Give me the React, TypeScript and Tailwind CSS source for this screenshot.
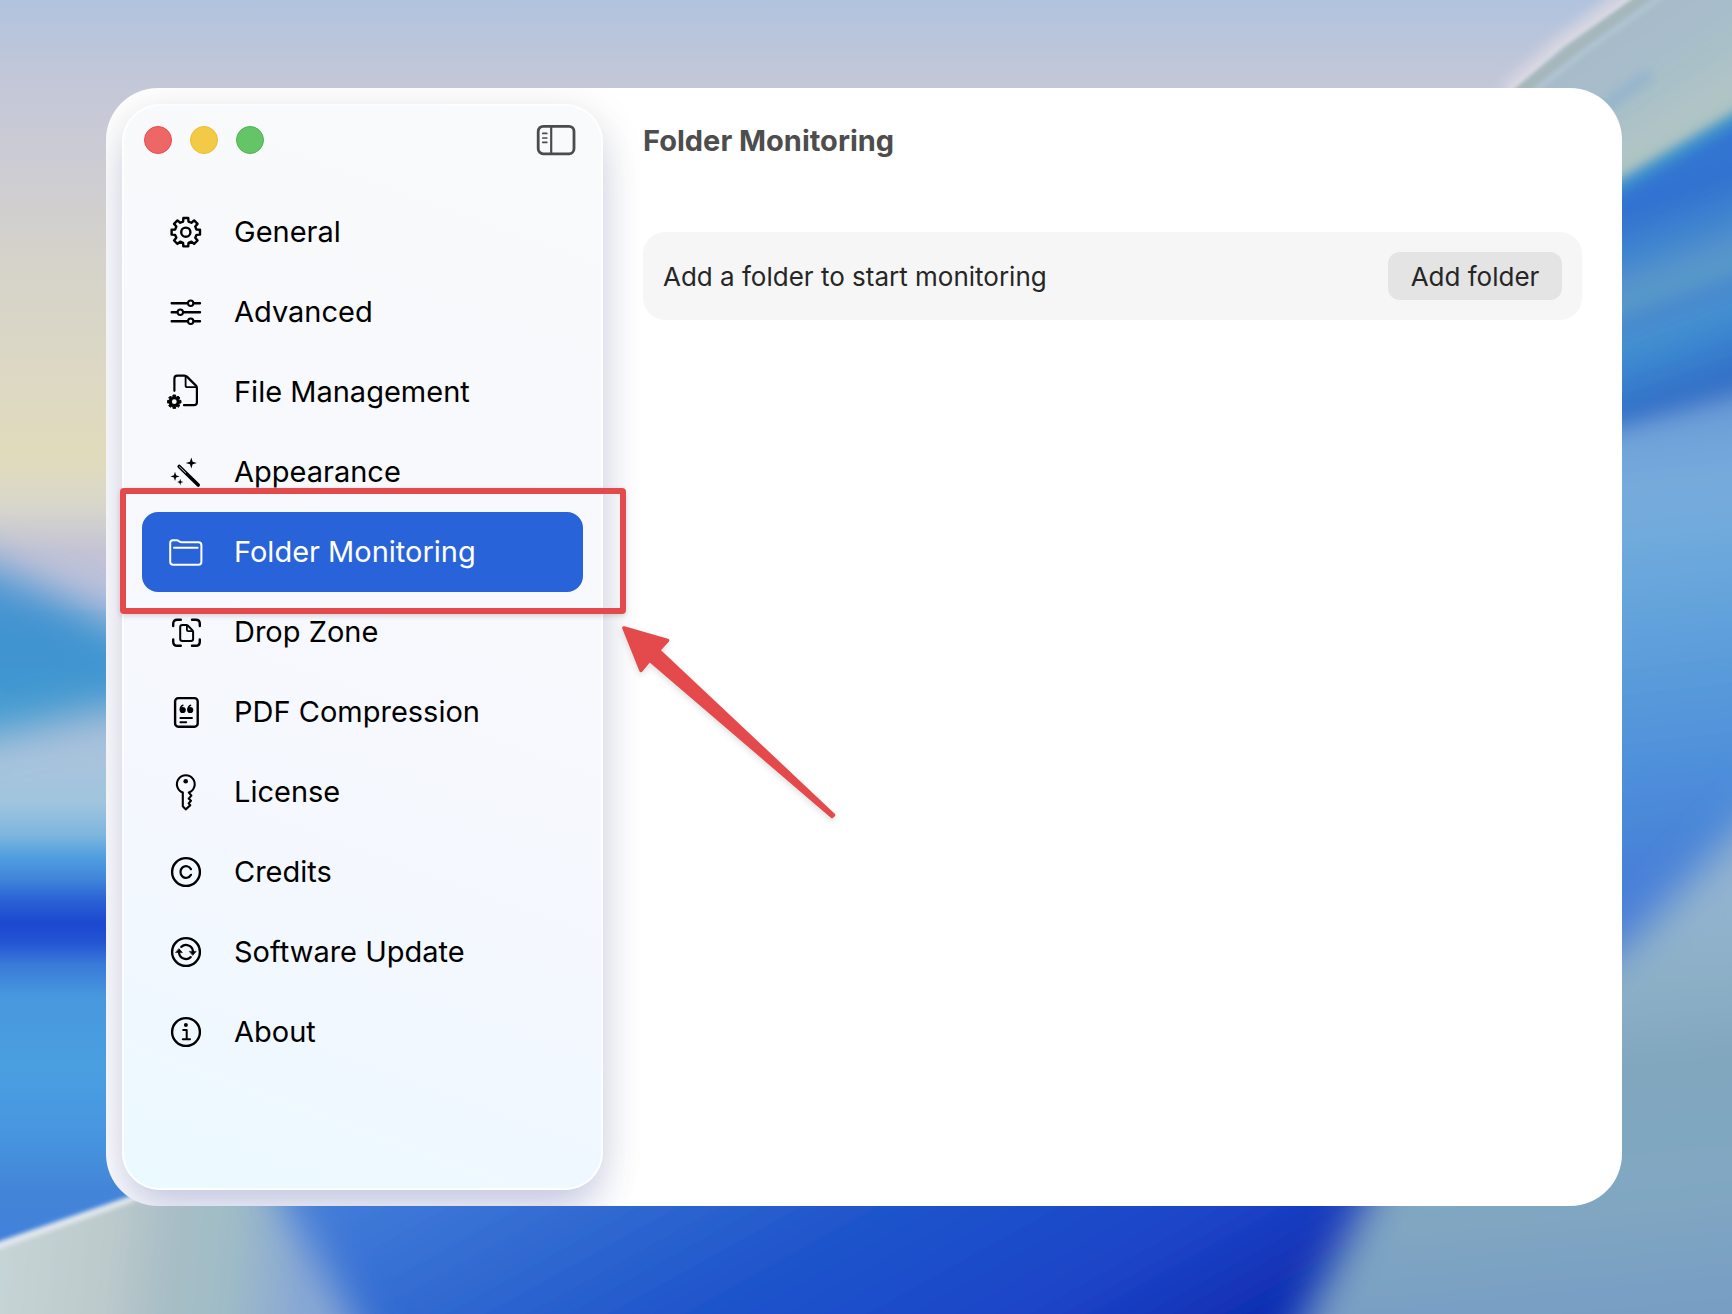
import type { ReactNode } from "react";

function gearPath(cx: number, cy: number, outer: number, inner: number, tipHalf: number, rootHalf: number) {
  const points: string[] = [];
  for (let i = 0; i < 8; i++) {
    const a = (i * Math.PI) / 4 - Math.PI / 2;
    const at = (r: number, t: number) => `${(cx + r * Math.cos(a + t)).toFixed(2)} ${(cy + r * Math.sin(a + t)).toFixed(2)}`;
    points.push(at(inner, -rootHalf), at(outer, -tipHalf), at(outer, tipHalf), at(inner, rootHalf));
  }
  return `M${points.join("L")}Z`;
}

function sparkPath(x: number, y: number, r: number) {
  const k = r * 0.24;
  return `M${x} ${y - r}L${x + k} ${y - k}L${x + r} ${y}L${x + k} ${y + k}L${x} ${y + r}L${x - k} ${y + k}L${x - r} ${y}L${x - k} ${y - k}Z`;
}

function Icon({ children }: { children: ReactNode }) {
  return (
    <svg
      viewBox="0 0 40 40"
      className="size-10 shrink-0 overflow-visible"
      fill="none"
      stroke="currentColor"
      strokeWidth="2.4"
      strokeLinecap="round"
      strokeLinejoin="round"
      aria-hidden="true"
    >
      {children}
    </svg>
  );
}

const icons = {
  general: (
    <Icon>
      <path d={gearPath(19.8, 20.2, 14.4, 11, 0.17, 0.25)} />
      <circle cx="19.8" cy="20.2" r="4.6" />
    </Icon>
  ),
  advanced: (
    <Icon>
      <path d="M5.7 11.3H21.7M27.7 11.3H34M5.7 20.3H11.3M17.3 20.3H34M5.7 29.3H21.7M27.7 29.3H34" />
      <circle cx="24.7" cy="11.3" r="2.7" strokeWidth="2" />
      <circle cx="14.3" cy="20.3" r="2.7" strokeWidth="2" />
      <circle cx="24.7" cy="29.3" r="2.7" strokeWidth="2" />
    </Icon>
  ),
  file: (
    <Icon>
      <path d="M8.4 18.8V6.6Q8.4 3.7 11.3 3.7H18.5Q20 3.7 21.2 4.9L29.7 13.4Q30.9 14.6 30.9 16V30.2Q30.9 33.2 27.9 33.2H18" strokeWidth="2.2" />
      <path d="M19.6 4.2V13.4Q19.6 15.2 21.4 15.2H30.2" strokeWidth="1.8" />
      <path d={gearPath(8.3, 29.7, 6.8, 5.2, 0.2, 0.26)} fill="currentColor" strokeWidth="1" />
      <circle cx="8.3" cy="29.7" r="2.4" className="fill-[#f8fafc]" stroke="none" />
    </Icon>
  ),
  appearance: (
    <Icon>
      <path d="M13.2 14.5L32.2 33" strokeWidth="3.6" />
      <path d="M13.4 14.7L19.6 20.8" className="stroke-[#d8dadc]" strokeWidth="1" />
      <path d={sparkPath(25.3, 11, 5.6)} fill="currentColor" stroke="none" />
      <path d={sparkPath(9, 24.4, 4.6)} fill="currentColor" stroke="none" />
      <path d={sparkPath(14.2, 30, 3.2)} fill="currentColor" stroke="none" />
    </Icon>
  ),
  folder: (
    <Icon>
      <path
        d="M4.2 12V11Q4.2 8.2 7 8.2H10.6Q11.8 8.2 12.8 9L13.6 9.6Q14.4 10.2 15.6 10.2H32.4Q35.4 10.2 35.4 13.2V29.8Q35.4 32.8 32.4 32.8H7.2Q4.2 32.8 4.2 29.8Z"
        strokeWidth="2"
      />
      <path d="M8 15.7H31.6" strokeWidth="2" />
    </Icon>
  ),
  drop: (
    <Icon>
      <path d="M7.2 14V11.8Q7.2 7.8 11.2 7.8H14.8M26 7.8H29.8Q33.8 7.8 33.8 11.8V14M33.8 27.4V29.8Q33.8 33.8 29.8 33.8H26M14.8 33.8H11.2Q7.2 33.8 7.2 29.8V27.4" />
      <path
        d="M14.2 15.2Q14.2 13 16.4 13H20Q21.2 13 22 13.8L26.3 18.1Q27.1 18.9 27.1 20.1V26.8Q27.1 29 24.9 29H16.4Q14.2 29 14.2 26.8Z"
        strokeWidth="2"
      />
      <path d="M20.9 13.6V17.6Q20.9 19.2 22.5 19.2H26.6" strokeWidth="1.8" />
    </Icon>
  ),
  pdf: (
    <Icon>
      <rect x="9.1" y="6.1" width="22.6" height="28.6" rx="3.2" />
      <circle cx="16.7" cy="18" r="3.1" fill="currentColor" stroke="none" />
      <circle cx="24.2" cy="18" r="3.1" fill="currentColor" stroke="none" />
      <path d="M14.3 17.4Q14.2 14.4 17 13.2M22 17.4Q21.9 14.4 24.7 13.2" strokeWidth="1.3" />
      <path d="M14.4 26H26M14.4 30.3H20.2" strokeWidth="1.9" />
    </Icon>
  ),
  key: (
    <Icon>
      <path
        d="M16.8 20.6V34.2L19.7 37.4L24.3 33.2L22.6 31.4L25 28.8L22.6 26.6L25.4 23.6L22.8 20.6A8.9 8.9 0 1 0 16.8 20.6Z"
        strokeWidth="2.1"
      />
      <circle cx="19.7" cy="9.3" r="2.3" fill="currentColor" stroke="none" />
    </Icon>
  ),
  credits: (
    <Icon>
      <circle cx="20" cy="20" r="13.9" />
      <path d="M25 17.2A5.6 5.9 0 1 0 25 22.8" strokeWidth="2.2" />
    </Icon>
  ),
  update: (
    <Icon>
      <circle cx="20" cy="20" r="13.9" />
      <path d="M15.3 14.9A7 7 0 0 1 27 19.4M24.7 25.1A7 7 0 0 1 13 20.6" strokeWidth="2.2" />
      <path d="M23.6 19.4H30.2L26.9 23.2ZM9.8 20.6H16.4L13.1 16.8Z" fill="currentColor" strokeWidth="0.6" />
    </Icon>
  ),
  about: (
    <Icon>
      <circle cx="20" cy="20" r="13.9" />
      <circle cx="19.9" cy="13" r="2" fill="currentColor" stroke="none" />
      <path d="M17.2 17.9H20.7V27.2M16.8 27.3H24" strokeWidth="2" />
    </Icon>
  ),
};

const items: { label: string; icon: ReactNode; active?: boolean }[] = [
  { label: "General", icon: icons.general },
  { label: "Advanced", icon: icons.advanced },
  { label: "File Management", icon: icons.file },
  { label: "Appearance", icon: icons.appearance },
  { label: "Folder Monitoring", icon: icons.folder, active: true },
  { label: "Drop Zone", icon: icons.drop },
  { label: "PDF Compression", icon: icons.pdf },
  { label: "License", icon: icons.key },
  { label: "Credits", icon: icons.credits },
  { label: "Software Update", icon: icons.update },
  { label: "About", icon: icons.about },
];

function Stops({ list }: { list: [number, string][] }) {
  return (
    <>
      {list.map(([offset, color]) => (
        <stop key={offset} offset={offset} stopColor={color} />
      ))}
    </>
  );
}

function Blur({ id, amount }: { id: string; amount: number }) {
  return (
    <filter id={id} x="-40%" y="-40%" width="180%" height="180%">
      <feGaussianBlur stdDeviation={amount} />
    </filter>
  );
}

function Wallpaper() {
  return (
    <svg
      className="absolute inset-0 h-full w-full"
      viewBox="0 0 1732 1314"
      preserveAspectRatio="none"
      aria-hidden="true"
    >
      <defs>
        <Blur id="blurThin" amount={2} />
        <Blur id="blurSoft" amount={6} />
        <Blur id="blurMid" amount={11} />
        <Blur id="blurWide" amount={20} />
        <linearGradient id="sky" gradientUnits="userSpaceOnUse" x1="0" y1="0" x2="0" y2="600">
          <Stops list={[[0, "#b1c3de"], [0.13, "#c2c7d8"], [0.25, "#cbcbd4"], [0.42, "#d5d2cb"], [0.62, "#dcd8c4"], [0.76, "#e1dbbc"], [0.84, "#d9d7cb"], [0.92, "#c3c3d5"], [1, "#b9c0dc"]]} />
        </linearGradient>
        <linearGradient id="teal" gradientUnits="userSpaceOnUse" x1="0" y1="560" x2="0" y2="750">
          <Stops list={[[0, "#5f9cd4"], [0.35, "#3e92d0"], [0.75, "#4299d0"], [1, "#4fa9d4"]]} />
        </linearGradient>
        <linearGradient id="waves" gradientUnits="userSpaceOnUse" x1="0" y1="716" x2="0" y2="1256">
          <Stops list={[[0, "#aabfda"], [0.08, "#a9c3dc"], [0.16, "#a0c5de"], [0.22, "#7eb6de"], [0.26, "#519fdf"], [0.3, "#4187da"], [0.34, "#2b62d5"], [0.385, "#1c47d0"], [0.42, "#2455d3"], [0.46, "#3a7ad9"], [0.52, "#4898de"], [0.65, "#499fe0"], [0.76, "#4897e0"], [0.88, "#4385d8"], [1, "#4180dc"]]} />
        </linearGradient>
        <linearGradient id="leaf" gradientUnits="userSpaceOnUse" x1="0" y1="1260" x2="300" y2="1290">
          <Stops list={[[0, "#c6d4d6"], [0.35, "#bccacc"], [0.55, "#a9bec6"], [0.75, "#9fbcc6"], [1, "#8aa9d4"]]} />
        </linearGradient>
        <linearGradient id="deep" gradientUnits="userSpaceOnUse" x1="330" y1="1206" x2="593" y2="1679">
          <Stops list={[[0, "#427cd8"], [0.33, "#2b63cf"], [0.5, "#1f54cb"], [0.65, "#1d4dca"], [0.83, "#1b42c6"], [1, "#102eb2"]]} />
        </linearGradient>
        <linearGradient id="glass" gradientUnits="userSpaceOnUse" x1="1580" y1="20" x2="1670" y2="160">
          <Stops list={[[0, "#a6bbc6"], [0.35, "#a8bccb"], [0.6, "#a9c0c8"], [0.8, "#b0c4c7"], [1, "#adc3be"]]} />
        </linearGradient>
        <linearGradient id="ribbon" gradientUnits="userSpaceOnUse" x1="1622" y1="180" x2="1702" y2="400">
          <Stops list={[[0, "#3374d2"], [0.15, "#3373d0"], [0.3, "#3f84cf"], [0.42, "#5492cc"], [0.5, "#5899c8"], [0.58, "#4a8ace"], [0.68, "#438fd0"], [0.78, "#3a84d0"], [0.92, "#3473c8"], [1, "#3770c6"]]} />
        </linearGradient>
        <linearGradient id="right" gradientUnits="userSpaceOnUse" x1="1622" y1="400" x2="1682" y2="920">
          <Stops list={[[0, "#6294d2"], [0.1, "#72a5da"], [0.2, "#76acdc"], [0.35, "#69a6dc"], [0.52, "#5a9cda"], [0.7, "#4f90da"], [0.85, "#4984d8"], [1, "#497dd8"]]} />
        </linearGradient>
        <linearGradient id="mist" gradientUnits="userSpaceOnUse" x1="1660" y1="900" x2="1700" y2="1314">
          <Stops list={[[0, "#93b4d0"], [0.2, "#8cb0c6"], [0.4, "#80a6be"], [0.7, "#81a7c2"], [1, "#779dc4"]]} />
        </linearGradient>
      </defs>
      <rect width="1732" height="620" fill="url(#sky)" />
      <rect y="610" width="866" height="704" fill="url(#waves)" />
      <path d="M-80 535L0 568L106 622L220 670V705L106 708L0 734L-80 748Z" fill="url(#teal)" filter="url(#blurWide)" />
      <path d="M-60 1270L0 1241L130 1196L300 1110H700V1500H-60Z" fill="#e1e7ec" filter="url(#blurThin)" />
      <path d="M-60 1278L0 1249L130 1203L300 1120H700V1500H-60Z" fill="url(#leaf)" filter="url(#blurThin)" />
      <path d="M230 1060L288 1206L350 1314L420 1460H1560V1060Z" fill="url(#deep)" filter="url(#blurWide)" />
      <path d="M1640 -16L1556 46L1506 90" stroke="#d6d5e2" strokeWidth="14" fill="none" filter="url(#blurSoft)" />
      <path d="M1644 -16L1622 0L1556 47L1506 90L1440 150H1800V-40Z" fill="#dcdae2" filter="url(#blurThin)" />
      <path d="M1654 -16L1632 0L1564 47L1514 90L1440 160V300H1800V-40Z" fill="url(#glass)" filter="url(#blurThin)" />
      <path d="M1662 -16L1570 52L1510 100" stroke="#a6b7ba" strokeWidth="9" fill="none" filter="url(#blurThin)" />
      <path d="M1680 -16L1584 52L1524 100" stroke="#b0c5d2" strokeWidth="5" fill="none" filter="url(#blurThin)" />
      <path d="M1590 118L1650 74" stroke="#93b3cc" strokeWidth="12" fill="none" filter="url(#blurSoft)" />
      <path d="M1500 250L1622 178L1732 114L1800 76V520H1500Z" fill="#3f93cc" filter="url(#blurSoft)" />
      <path d="M1500 262L1622 192L1732 128L1800 90V520H1500Z" fill="url(#ribbon)" filter="url(#blurSoft)" />
      <path d="M1500 452L1622 426L1732 396L1800 380V1100H1500Z" fill="url(#right)" filter="url(#blurMid)" />
      <path d="M1420 1080L1622 950L1732 835L1800 770V1500H1240L1306 1314L1362 1206Z" fill="url(#mist)" filter="url(#blurWide)" />
    </svg>
  );
}

function Callout() {
  return (
    <div className="pointer-events-none absolute -top-6 right-[-43px] bottom-[-22px] left-[-22px] z-10 rounded-sm border-6 border-[#e4494b] shadow-[0_2px_5px_rgba(0,0,0,0.15)]">
      <svg
        viewBox="0 0 220 204"
        className="absolute top-[126px] left-[494px] h-[204px] w-[220px] drop-shadow-[0_3px_3px_rgba(0,0,0,0.12)]"
        aria-hidden="true"
      >
        <path
          d="M4 8L47.5 20.6L38.5 30.2L213.5 195L212 196.4L29.4 40L21 50.4Z"
          fill="#e4494b"
          stroke="#e4494b"
          strokeWidth="3.6"
          strokeLinejoin="round"
        />
      </svg>
    </div>
  );
}

function Sidebar() {
  return (
    <aside className="relative m-4 mr-0 w-[481px] shrink-0 rounded-[38px] border-2 border-white/80 bg-[linear-gradient(200deg,#f9fafb_0%,#f8f9fc_30%,#f5f8fe_65%,#f0f8ff_85%,#eafaff_100%)] shadow-[0_8px_44px_rgba(0,0,0,0.12),0_28px_40px_-6px_rgba(70,90,210,0.2)]">
      <div className="flex h-[68px] items-center justify-between pr-[25px] pl-5">
        <div className="flex gap-[18px]">
          <button aria-label="Close" className="size-7 rounded-full border border-[#e84a4a] bg-[#ee6767]" />
          <button aria-label="Minimize" className="size-7 rounded-full border border-[#eebd2a] bg-[#f3ca45]" />
          <button aria-label="Zoom" className="size-7 rounded-full border border-[#46b94c] bg-[#66c468]" />
        </div>
        <button aria-label="Toggle sidebar" className="text-[#4b4b4b]">
          <svg viewBox="0 0 40 32" className="h-8 w-10" fill="none" stroke="currentColor" strokeLinecap="round" aria-hidden="true">
            <rect x="2.2" y="2.4" width="35.8" height="27.4" rx="5" strokeWidth="2.8" />
            <path d="M15.2 3V29.4" strokeWidth="2.2" />
            <path d="M6.8 9.4H10.8M6.8 14H10.8M6.8 18.4H10.8" strokeWidth="1.7" />
          </svg>
        </button>
      </div>
      <nav aria-label="Settings" className="mt-[18px] px-[18px]">
        <ul>
          {items.map((item) => (
            <li key={item.label} className="relative">
              <a
                href="#"
                aria-current={item.active ? "page" : undefined}
                className={
                  item.active
                    ? "flex h-20 items-center gap-7 rounded-2xl bg-[#2963d9] pl-6 text-[29px] text-white"
                    : "flex h-20 items-center gap-7 rounded-2xl pl-6 text-[29px] text-black"
                }
              >
                {item.icon}
                {item.label}
              </a>
              {item.active && <Callout />}
            </li>
          ))}
        </ul>
      </nav>
    </aside>
  );
}

export default function App() {
  return (
    <div className="relative flex min-h-screen overflow-hidden bg-[#3f80d8] pt-[88px] pr-[110px] pb-[108px] pl-[106px] font-[Inter,sans-serif]">
      <Wallpaper />
      <div className="relative flex flex-1 overflow-hidden rounded-[52px] bg-white">
        <Sidebar />
        <main className="flex-1 pr-10 pl-10">
          <h1 className="mt-8 text-[29px] leading-[42px] font-bold text-[#4d4d4d]">Folder Monitoring</h1>
          <section className="mt-[70px] flex h-[88px] items-center justify-between rounded-[22px] bg-[#f6f6f6] px-5 text-[26px] text-[#262626]">
            <p>Add a folder to start monitoring</p>
            <button className="h-12 w-[174px] rounded-xl bg-[#e4e4e4]">Add folder</button>
          </section>
        </main>
      </div>
    </div>
  );
}
